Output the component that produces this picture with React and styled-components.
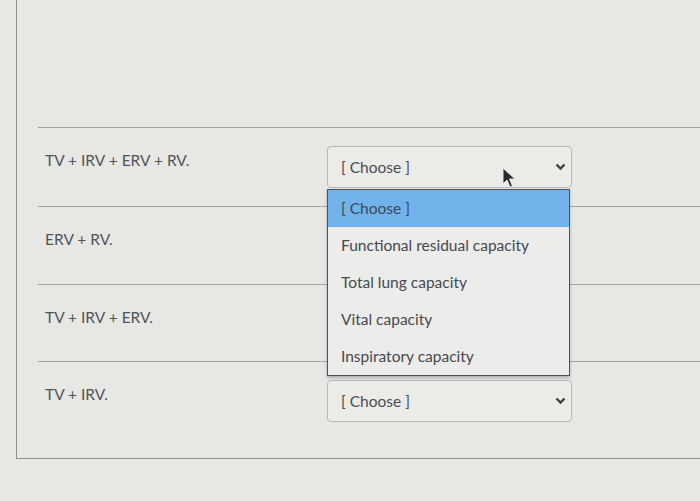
import React from "react";
import styled, { createGlobalStyle } from "styled-components";

const GlobalStyle = createGlobalStyle`
  html, body {
    margin: 0;
    padding: 0;
    height: 501px;
    overflow: hidden;
    background: #e7e7e4;
    font-family: Lato, "Open Sans", sans-serif;
  }
`;

const Page = styled.div`
  position: relative;
  height: 501px;
  width: 700px;
  padding-left: 16px;
  box-sizing: border-box;
  overflow: hidden;
`;

const Panel = styled.div`
  height: 459px;
  border-left: 1px solid #8d8f90;
  border-bottom: 1px solid #8d8f90;
  padding-top: 127px;
  box-sizing: border-box;
`;

const Row = styled.div`
  display: grid;
  grid-template-columns: 289px 245px;
  margin-left: 21px;
  height: ${p => p.h}px;
  border-top: 1px solid #a3a5a6;
  box-sizing: border-box;
`;

const Label = styled.div`
  padding: 22px 0 0 7px;
  line-height: 20px;
  font-size: 15.5px;
  color: #50535a;
`;

const SelectBox = styled.div`
  margin-top: 18px;
  height: 42px;
  border: 1px solid #b5b7b9;
  border-radius: 4px;
  background: #ebebe8;
  display: flex;
  align-items: center;
  justify-content: space-between;
  padding: 0 5px 0 13px;
  box-sizing: border-box;
  font-size: 15.5px;
  color: #4a4d52;
  visibility: ${p => (p.covered ? "hidden" : "visible")};
`;

const Chevron = () => (
  <svg width="11" height="8" viewBox="0 0 11 8">
    <path d="M1.5 1.5 L5.5 5.5 L9.5 1.5" fill="none" stroke="#3a3d42" strokeWidth="2.3" />
  </svg>
);

const Menu = styled.div`
  position: absolute;
  left: 327px;
  top: 189px;
  width: 243px;
  background: #ececea;
  border: 1px solid #4f5358;
  box-shadow: 0 2px 3px rgba(60, 70, 90, 0.35);
  box-sizing: border-box;
`;

const Option = styled.div`
  height: 37px;
  line-height: 37px;
  padding-left: 13px;
  font-size: 15.5px;
  color: ${p => (p.active ? "#3d4858" : "#46494e")};
  background: ${p => (p.active ? "#70b3ea" : "transparent")};
`;

const Cursor = styled.svg`
  position: absolute;
  left: 502px;
  top: 167px;
`;

const ROWS = [
  { label: "TV + IRV + ERV + RV.", h: 79 },
  { label: "ERV + RV.", h: 78, covered: true },
  { label: "TV + IRV + ERV.", h: 77, covered: true },
  { label: "TV + IRV.", h: 97 }
];

const OPTIONS = [
  "[ Choose ]",
  "Functional residual capacity",
  "Total lung capacity",
  "Vital capacity",
  "Inspiratory capacity"
];

export default function App() {
  return (
    <Page>
      <GlobalStyle />
      <Panel>
        {ROWS.map(row => (
          <Row key={row.label} h={row.h}>
            <Label>{row.label}</Label>
            {row.covered ? (
              <SelectBox covered />
            ) : (
              <SelectBox>
                <span>[ Choose ]</span>
                <Chevron />
              </SelectBox>
            )}
          </Row>
        ))}
      </Panel>
      <Menu>
        {OPTIONS.map((opt, i) => (
          <Option key={opt} active={i === 0}>
            {opt}
          </Option>
        ))}
      </Menu>
      <Cursor width="14" height="22" viewBox="0 0 14 22">
        <path d="M1 1 L1 17 L5 13 L8 20 L10.5 19 L7.5 12 L13 12 Z" fill="#26292e" stroke="#e7e7e4" strokeWidth="1" />
      </Cursor>
    </Page>
  );
}
